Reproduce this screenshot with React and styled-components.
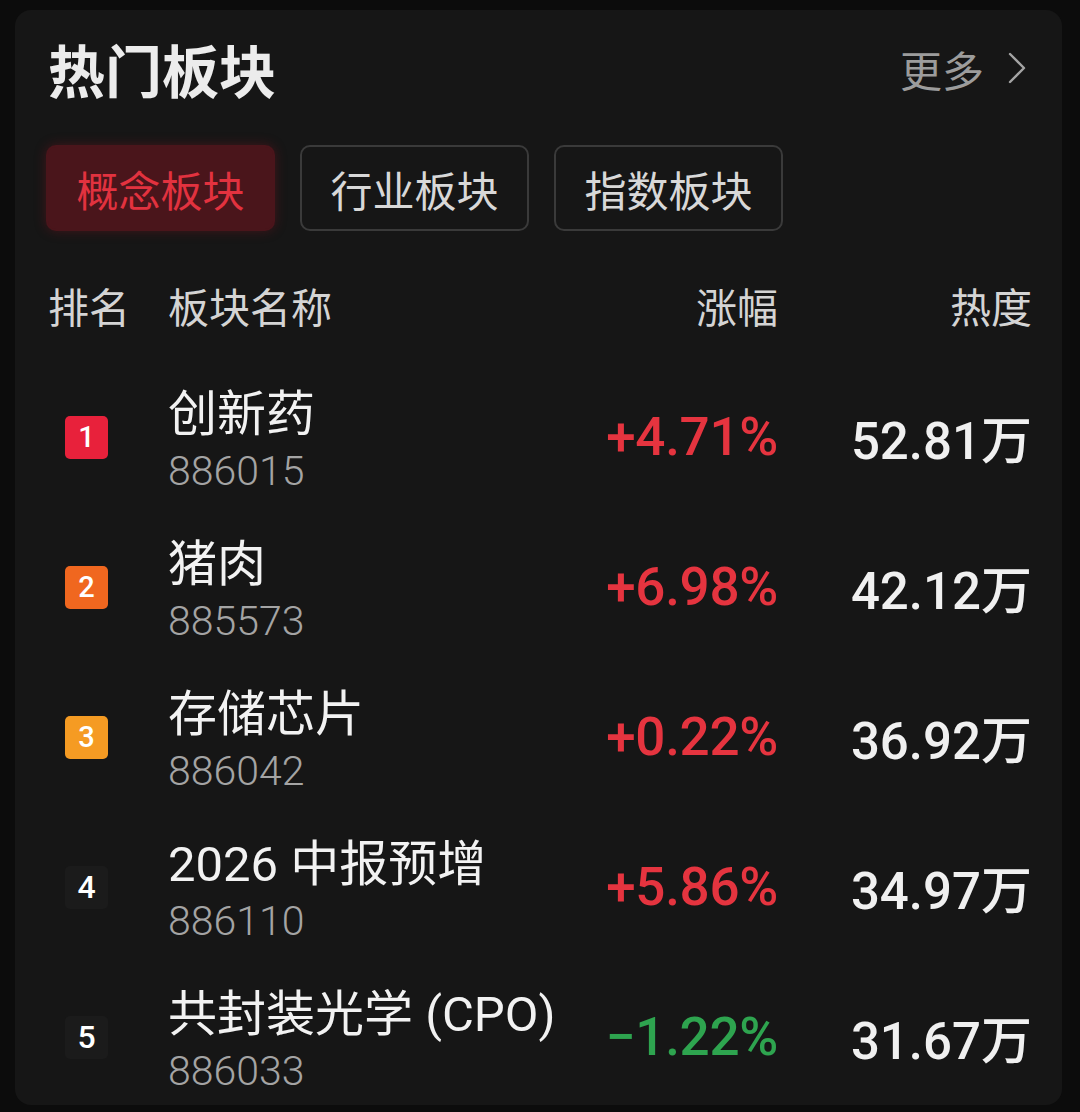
import React from "react";
import styled, { createGlobalStyle } from "styled-components";

const GlobalStyle = createGlobalStyle`
  body {
    margin: 0;
    background: #0c0c0c;
    font-family: Roboto, "Noto Sans CJK SC", sans-serif;
  }
`;

const Card = styled.div`
  box-sizing: border-box;
  width: 1047px;
  height: 1095px;
  margin: 10px 0 0 15px;
  padding: 29px 30px 0 33px;
  background: #161616;
  border-radius: 16px;
  overflow: hidden;
`;

const TitleRow = styled.div`
  display: flex;
  align-items: center;
  justify-content: space-between;
  height: 58px;
`;

const Title = styled.h1`
  margin: 0;
  font-family: "Noto Sans CJK SC", sans-serif;
  font-size: 57px;
  line-height: 58px;
  font-weight: 700;
  color: #ececec;
`;

const More = styled.div`
  display: flex;
  align-items: center;
  gap: 24px;
  margin-right: 6px;
  font-family: "Noto Sans CJK SC", sans-serif;
  font-size: 42px;
  color: #9c9c9c;
`;

const Tabs = styled.div`
  display: flex;
  gap: 25px;
  margin: 48px 0 0 -2px;
`;

const Tab = styled.div`
  box-sizing: border-box;
  width: 229px;
  height: 86px;
  display: flex;
  align-items: center;
  justify-content: center;
  border-radius: 10px;
  font-family: "Noto Sans CJK SC", sans-serif;
  font-size: 42px;
  color: ${(p) => (p.active ? "#e2323f" : "#d8d8d8")};
  background: ${(p) => (p.active ? "#4a151b" : "transparent")};
  border: 2px solid ${(p) => (p.active ? "#4a151b" : "#3a3a3a")};
  box-shadow: ${(p) => (p.active ? "0 0 12px rgba(120, 20, 30, 0.45)" : "none")};
`;

const Grid = styled.div`
  display: grid;
  grid-template-columns: 120px 1fr 200px 254px;
  align-items: center;
`;

const Header = styled(Grid)`
  margin-top: 44px;
  height: 44px;
  font-family: "Noto Sans CJK SC", sans-serif;
  font-size: 41px;
  color: #d4d4d4;
`;

const HeadCell = styled.div`
  text-align: ${(p) => (p.right ? "right" : "left")};
`;

const List = styled.div`
  margin-top: 43px;
`;

const Row = styled(Grid)`
  height: 150px;
`;

const Badge = styled.div`
  width: 43px;
  height: 43px;
  margin-left: 17px;
  display: flex;
  align-items: center;
  justify-content: center;
  border-radius: 5px;
  background: ${(p) => p.color || "#1b1b1b"};
  color: #fff;
  font-size: ${(p) => (p.color ? "29px" : "32px")};
  font-weight: 500;
`;

const NameBlock = styled.div`
  display: flex;
  flex-direction: column;
  margin-top: 12px;
`;

const Name = styled.div`
  font-size: 49px;
  line-height: 56px;
  color: #f2f2f2;
  white-space: nowrap;
`;

const Code = styled.div`
  font-size: 41px;
  font-weight: 300;
  line-height: 56px;
  color: #a4a4a4;
`;

const Pct = styled.div`
  text-align: right;
  font-size: 53px;
  font-weight: 500;
  letter-spacing: -0.3px;
  color: ${(p) => (p.down ? "#2ea44f" : "#e5343f")};
`;

const Heat = styled.div`
  text-align: right;
  font-size: 51px;
  font-weight: 500;
  color: #f0f0f0;
`;

const rows = [
  { rank: 1, name: "创新药", code: "886015", pct: "+4.71%", heat: "52.81万", badge: "#e8213b" },
  { rank: 2, name: "猪肉", code: "885573", pct: "+6.98%", heat: "42.12万", badge: "#f0671f" },
  { rank: 3, name: "存储芯片", code: "886042", pct: "+0.22%", heat: "36.92万", badge: "#f59b23" },
  { rank: 4, name: "2026 中报预增", code: "886110", pct: "+5.86%", heat: "34.97万" },
  { rank: 5, name: "共封装光学 (CPO)", code: "886033", pct: "−1.22%", heat: "31.67万", down: true },
];

const Chevron = () => (
  <svg width="18" height="32" viewBox="0 0 18 32" fill="none">
    <path d="M2 2 L16 16 L2 30" stroke="#a4a4a4" strokeWidth="2.4" strokeLinecap="round" strokeLinejoin="round" />
  </svg>
);

export default function App() {
  return (
    <>
      <GlobalStyle />
      <Card>
        <TitleRow>
          <Title>热门板块</Title>
          <More>
            更多
            <Chevron />
          </More>
        </TitleRow>

        <Tabs>
          <Tab active>概念板块</Tab>
          <Tab>行业板块</Tab>
          <Tab>指数板块</Tab>
        </Tabs>

        <Header>
          <HeadCell>排名</HeadCell>
          <HeadCell>板块名称</HeadCell>
          <HeadCell right>涨幅</HeadCell>
          <HeadCell right>热度</HeadCell>
        </Header>

        <List>
          {rows.map((r) => (
            <Row key={r.rank}>
              <Badge color={r.badge}>{r.rank}</Badge>
              <NameBlock>
                <Name>{r.name}</Name>
                <Code>{r.code}</Code>
              </NameBlock>
              <Pct down={r.down}>{r.pct}</Pct>
              <Heat>{r.heat}</Heat>
            </Row>
          ))}
        </List>
      </Card>
    </>
  );
}
